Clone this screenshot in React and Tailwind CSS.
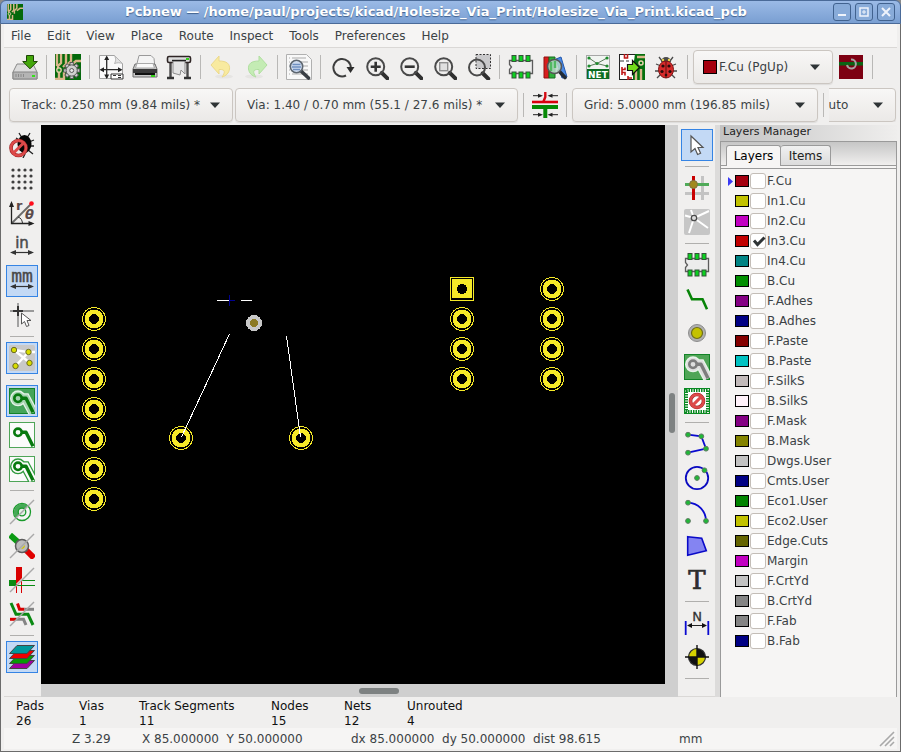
import React from 'react';

function Svg({ children, spill }) {
  return (
    <svg width="26" height="26" viewBox="0 0 26 26" fill="none" className={spill ? 'shrink-0 overflow-visible' : 'shrink-0'} aria-hidden="true">
      {children}
    </svg>
  );
}

const BoardArt = () => (
  <>
    <rect width="26" height="26" fill="#04690b" />
    <path d="M2 0v12M6 0v9l-3 3v4M11 0v10l-3 3M16 0v7l-4 4v5M26 7h-5l-5 4M4 18v8M9 18v8M0 25h8" stroke="#d9b68a" strokeWidth="2.4" />
    <circle cx="4" cy="16" r="2.2" fill="#1f8a24" stroke="#e8d2ac" strokeWidth="1.3" />
  </>
);

const Lens = ({ cx, cy, r = 8 }) => (
  <>
    <path d={`M${cx + r * 0.72} ${cy + r * 0.72}L${cx + r + 3.2} ${cy + r + 3.2}`} stroke="#303030" strokeWidth="4" strokeLinecap="round" />
    <circle cx={cx} cy={cy} r={r} stroke="#4a4a4a" strokeWidth="2" />
  </>
);

const MiniPad = ({ track, halo, bg }) => (
  <>
    {halo && (
      <>
        <path d="M9 10.3h7.5l7.5 14" stroke={halo} strokeWidth="10" />
        <circle cx="9" cy="10.3" r="8" fill={halo} />
        <path d="M9 10.3h7.5l7.5 14" stroke={bg} strokeWidth="7.6" />
        <circle cx="9" cy="10.3" r="6.6" fill={bg} />
      </>
    )}
    <path d="M9 10.3h8l7 14" stroke={track} strokeWidth="3.4" strokeLinejoin="round" />
    <circle cx="9" cy="10.3" r="3.7" fill={bg} stroke={track} strokeWidth="2.6" />
  </>
);

const Slash = () => <path d="M1 25L25 1" stroke="#a9a9a9" strokeWidth="1.4" />;

const Chip = () => (
  <>
    <path d="M1.5 6.5h23v13h-23v-4l2-2.500-2-2.500z" fill="#ececec" stroke="#5c5c5c" strokeWidth="1.3" />
    {[4, 11, 18].map((x) => (
      <g key={x} fill="#0bd11f" stroke="#35523a" strokeWidth="1">
        <rect x={x} y="1.5" width="4" height="6" />
        <rect x={x} y="18" width="4" height="6" />
      </g>
    ))}
  </>
);

const Arrows = ({ y }) => (
  <>
    <path d={`M3 ${y}H23`} stroke="#333" strokeWidth="1.2" />
    <path d={`M1 ${y}l6-2.600v5.200zM25 ${y}l-6-2.600v5.200z`} fill="#333" />
  </>
);

const NoSign = ({ cx, cy, r }) => (
  <>
    <circle cx={cx} cy={cy} r={r} stroke="#9e2626" strokeWidth="3.6" />
    <circle cx={cx} cy={cy} r={r} stroke="#de4a4a" strokeWidth="2.4" />
    <path d={`M${cx - r * 0.68} ${cy - r * 0.68}L${cx + r * 0.68} ${cy + r * 0.68}`} stroke="#de4a4a" strokeWidth="3" transform={`rotate(90 ${cx} ${cy})`} />
  </>
);

const Node = ({ x, y }) => <circle cx={x} cy={y} r="2.4" fill="#1fb836" stroke="#5f7a63" strokeWidth="1" />;

const icons = {
  save: (
    <Svg>
      <path d="M5 10h16l4 8v7H1v-7z" fill="#dcdcdc" stroke="#8a8a8a" />
      <path d="M1 18h24v7H1z" fill="#b4b4b4" stroke="#858585" />
      <path d="M4 20v3M6.500 20v3M9 20v3M11.500 20v3" stroke="#8a8a8a" />
      <rect x="20" y="21" width="3" height="2" fill="#35e01b" />
      <path d="M14.500 1.500h7v6h3.800L18 14.800 10.700 7.500h3.800z" fill="#43a60a" stroke="#1d4506" />
    </Svg>
  ),
  board: (
    <Svg>
      <BoardArt />
      {[0, 45, 90, 135].map((a) => (
        <path key={a} d="M16.700 8v17" stroke="#5a5a5a" strokeWidth="4.200" transform={`rotate(${a} 16.700 16.500)`} />
      ))}
      {[0, 45, 90, 135].map((a) => (
        <path key={a} d="M16.700 9v15" stroke="#d0d0d0" strokeWidth="2.400" transform={`rotate(${a} 16.700 16.500)`} />
      ))}
      <circle cx="16.700" cy="16.500" r="5.600" fill="#d0d0d0" stroke="#5a5a5a" />
      <circle cx="16.700" cy="16.500" r="2" fill="#e9e9e9" stroke="#5a5a5a" />
    </Svg>
  ),
  page: (
    <Svg>
      <path d="M1.500 1.500h15l8 8v15h-23z" fill="#fafafa" stroke="#a2a2a2" />
      <path d="M16.500 1.500c2 4 1 6 0 8 3-1 5-1 8 0z" fill="#e3e3e3" stroke="#b5b5b5" />
      <path d="M8.700 3v21M3 15.700h20" stroke="#2c2c2c" strokeWidth="1.300" />
      <path d="M8.700 1.500l2.500 4.500h-5zM8.700 25l2.500-4.500h-5zM1.500 15.700L6 13.200v5zM24.500 15.700L20 13.200v5z" fill="#222" />
      <path d="M13 20h12v5H13z" fill="#fff" stroke="#333" />
      <path d="M15 21.500h3M20 21.500h3M20 23.500h3" stroke="#333" />
    </Svg>
  ),
  print: (
    <Svg>
      <path d="M7 1.500h12l3 3 1 9H4z" fill="#f4f4f4" stroke="#9a9a9a" />
      <path d="M3 10h20l2 5v8H1v-8z" fill="#c9c9c9" stroke="#6f6f6f" />
      <path d="M5 9.500h16l1.500 4.500h-19z" fill="#fafafa" stroke="#aaa" />
      <rect x="1" y="15" width="24" height="4" fill="#3a3a3a" />
      <rect x="3" y="19" width="20" height="2" fill="#111" />
      <rect x="19" y="21" width="4" height="2" fill="#35d01b" />
    </Svg>
  ),
  plot: (
    <Svg>
      <path d="M4.500 6v18M21.500 6v18" stroke="#4a4a4a" strokeWidth="2.400" />
      <path d="M1 24h7M18 24h7" stroke="#333" strokeWidth="2.400" />
      <rect x="1.500" y="2.500" width="23" height="6" rx="1.500" fill="#ddd" stroke="#2f2525" strokeWidth="1.600" />
      <path d="M7 7h12v13l-4-4-1 5-7-2z" fill="#e4e4e4" stroke="#8d8d8d" />
      <path d="M6 6.500h14" stroke="#222" strokeWidth="1.400" />
      <rect x="20" y="4" width="3" height="2" fill="#35d01b" />
    </Svg>
  ),
  undo: (
    <Svg>
      <ellipse cx="15" cy="22.500" rx="9" ry="2" fill="#e6e5e3" />
      <path d="M2 11l8-9v5c8 0 11 3 10.500 8-.500 4-3.500 7-7.500 8 3-4 4-8-3-7.500V20z" fill="#f8ea9f" stroke="#ecd98a" />
    </Svg>
  ),
  redo: (
    <Svg>
      <ellipse cx="11" cy="22.500" rx="9" ry="2" fill="#e6e5e3" />
      <path d="M24 11l-8-9v5c-8 0-11 3-10.500 8 .500 4 3.500 7 7.500 8-3-4-4-8 3-7.500V20z" fill="#c4ecb4" stroke="#b0dfa0" />
    </Svg>
  ),
  find: (
    <Svg>
      <path d="M.500.500h20l5 5v20H.500z" fill="#f8f8f8" stroke="#b0b0b0" />
      <path d="M3 4h1M3 8h1M3 12h1M3 16h1M3 20h1M6 4h14M6 8h16M6 12h16M6 16h16M6 20h16" stroke="#aaa" />
      <path d="M15 17l7.500 7" stroke="#3a3f45" strokeWidth="3.600" strokeLinecap="round" />
      <circle cx="10.500" cy="12.500" r="6.200" fill="#cfdcf0" stroke="#5d6670" strokeWidth="1.600" />
      <path d="M6.500 10.500h8M6 13h9M7 15.500h7" stroke="#6f8fc0" strokeWidth="1.400" />
    </Svg>
  ),
  refresh: (
    <Svg>
      <path d="M17 21.500A8.700 8.700 0 1 1 21.800 14" stroke="#3d3d3d" strokeWidth="2" />
      <path d="M17.500 13h8l-4 6z" fill="#2c2c2c" />
    </Svg>
  ),
  zoomIn: (
    <Svg>
      <Lens cx={12.7} cy={12.7} r={8.5} />
      <path d="M7.700 12.700h10M12.700 7.700v10" stroke="#333" strokeWidth="2.600" />
    </Svg>
  ),
  zoomOut: (
    <Svg>
      <Lens cx={12.7} cy={12.7} r={8.5} />
      <path d="M7.700 12.700h10" stroke="#333" strokeWidth="2.600" />
    </Svg>
  ),
  zoomFit: (
    <Svg>
      <Lens cx={12.7} cy={12.7} r={8.5} />
      <rect x="8.700" y="8.700" width="8" height="8" fill="#e0e0e0" stroke="#8f8f8f" strokeWidth="1.400" />
    </Svg>
  ),
  zoomArea: (
    <Svg>
      <rect x="11" y=".500" width="14.500" height="14" fill="#c9c9cb" stroke="#333" strokeDasharray="2 1.500" />
      <Lens cx={12} cy={13.5} r={8} />
    </Svg>
  ),
  chip: <Svg><Chip /></Svg>,
  library: (
    <Svg>
      <path d="M2 3h5v21H2z" fill="#d81e1e" stroke="#8f1010" />
      <path d="M7 3h6v21H7z" fill="#2fae3a" stroke="#176b1f" />
      <path d="M14 5l5-2 6 20-5 1z" fill="#4a8ae6" stroke="#2358ad" />
      <path d="M17 17l6 6.500" stroke="#222b36" strokeWidth="3.600" strokeLinecap="round" />
      <circle cx="12.500" cy="12.500" r="7" fill="#b9d8c9" fillOpacity=".85" stroke="#555" strokeWidth="1.600" />
      <path d="M9 8v9M13 7v7" stroke="#52b862" strokeWidth="2.400" />
    </Svg>
  ),
  net: (
    <Svg>
      <rect x="1.500" y="1.500" width="23" height="23" fill="#f1f4f1" stroke="#a6a6a6" />
      <path d="M4 4l8 5.500L22 4M4 12l8-2.500L22 12" stroke="#5a7a5a" />
      <g fill="#1c8a2b"><circle cx="4" cy="4" r="1.600" /><circle cx="22" cy="4" r="1.600" /><circle cx="12" cy="9.500" r="1.600" /><circle cx="4" cy="12" r="1.600" /><circle cx="22" cy="12" r="1.600" /></g>
      <rect x="2" y="15" width="22" height="10" fill="#0c6d22" />
      <text x="13" y="23.500" textAnchor="middle" fontSize="9" fontWeight="bold" fontFamily="DejaVu Sans, sans-serif" fill="#fff">NET</text>
    </Svg>
  ),
  netlist: (
    <Svg>
      <rect x=".500" y=".500" width="25" height="25" fill="#fff" stroke="#222" />
      <path d="M16 0h10v26H14V14z" fill="#05700d" />
      <path d="M18 3h8M17 17v9M22 15v11" stroke="#d9b68a" strokeWidth="2.400" />
      <circle cx="22" cy="9" r="2" fill="#05700d" stroke="#e8d2ac" strokeWidth="1.500" />
      <path d="M5.500 0v4h3V0M3 13v8M3 15.500h3v-2M3 18.500h3v3M9 22v4M9 24h4" stroke="#c01818" strokeWidth="1.600" />
      <path d="M0 7h5M7 7h3" stroke="#333" />
      <path d="M8.500 10.500h5v-4l7 7-7 7v-4h-5z" fill="#73dd1b" stroke="#111" strokeWidth="1.200" />
    </Svg>
  ),
  bug: (
    <Svg>
      <path d="M6 3l3 4M20 3l-3 4M3 10l5 2M23 10l-5 2M2 17h6M24 17h-6M4 24l4-4M22 24l-4-4" stroke="#4a4a4a" strokeWidth="1.300" />
      <path d="M8 8a5 5 0 0 1 10 0z" fill="#4a4a4a" />
      <circle cx="10" cy="6" r="1.200" fill="#e9d24b" /><circle cx="16" cy="6" r="1.200" fill="#e9d24b" />
      <ellipse cx="13" cy="15.500" rx="7.500" ry="8.500" fill="#d62a2a" stroke="#7d1414" />
      <path d="M13 7.500V24" stroke="#5a0f0f" />
      <g fill="#2a0c0c"><circle cx="10" cy="12" r="1.600" /><circle cx="16" cy="12" r="1.600" /><circle cx="9" cy="17.500" r="1.600" /><circle cx="17" cy="17.500" r="1.600" /><circle cx="13" cy="21" r="1.300" /></g>
    </Svg>
  ),
  layerPair: (
    <Svg>
      <rect x="1" y="1" width="24" height="24" fill="#7d0012" />
      <rect x="1" y="8" width="24" height="3.500" fill="#0b6414" />
      <path d="M13 5.500a4.500 4.500 0 1 1-4 5.500" stroke="#a9a2a2" strokeWidth="2" />
    </Svg>
  ),
  clearance: (
    <Svg>
      <path d="M13.300 0v5l-2 5" stroke="#d40b12" strokeWidth="2.400" />
      <path d="M0 10h26" stroke="#d8000c" strokeWidth="2.600" />
      <path d="M0 15h26" stroke="#068a06" strokeWidth="4" />
      <path d="M13.300 16v10" stroke="#068a06" strokeWidth="4" />
      <path d="M1 3.700h8M26 3.700h-8M1 22.700h8M26 22.700h-8" stroke="#222" />
      <path d="M11 3.700L6 1.700v4zM15.500 3.700l5-2v4zM11 22.700l-5-2v4zM15.500 22.700l5-2v4z" fill="#222" />
    </Svg>
  ),
  drcOff: (
    <Svg>
      <path d="M10 1l3 5M21 1l-3 5M25 8l-5 2M25 14h-5M24 22l-5-4M7 6l5 3M16 22l-2 4" stroke="#222" strokeWidth="1.300" />
      <ellipse cx="15.500" cy="12" rx="7" ry="9" fill="#050505" />
      <circle cx="9.500" cy="16" r="7.500" stroke="#9e2626" strokeWidth="3.600" />
      <circle cx="9.500" cy="16" r="7.500" stroke="#de4a4a" strokeWidth="2.400" />
      <path d="M4.500 21l10-10" stroke="#de4a4a" strokeWidth="3" />
    </Svg>
  ),
  grid: (
    <Svg>
      {[4, 10, 16, 22].map((y) => [4, 10, 16, 22].map((x) => <circle key={`${x}-${y}`} cx={x} cy={y} r="1.600" fill="#3f3f3f" />))}
    </Svg>
  ),
  polar: (
    <Svg spill>
      <path d="M2.500 23.500L22 4" stroke="#6a6a6a" strokeWidth="1.800" />
      <path d="M2.500 3v20.500H23" stroke="#222" strokeWidth="1.300" />
      <path d="M2.500 1L5 7H0zM25.500 23.500l-6-2.500v5z" fill="#222" />
      <path d="M9 17c3 1 4 3 4.500 6" stroke="#333" />
      <circle cx="22.500" cy="3.500" r="2.300" fill="#ff0d1b" />
      <text x="7" y="10" fontSize="13" fontWeight="bold" fontFamily="DejaVu Sans, sans-serif" fill="#5a4a4a">r</text>
      <text x="16" y="19" fontSize="13" fontWeight="bold" fontStyle="italic" fontFamily="DejaVu Sans, sans-serif" fill="#5a4a4a">θ</text>
    </Svg>
  ),
  inch: (
    <Svg spill>
      <text x="13" y="14" textAnchor="middle" fontSize="15" fontFamily="DejaVu Sans, sans-serif" fill="#4a4a4a" stroke="#4a4a4a" strokeWidth=".500">in</text>
      <Arrows y={18.5} />
    </Svg>
  ),
  mm: (
    <Svg spill>
      <text x="13" y="14" textAnchor="middle" fontSize="18" fontFamily="DejaVu Sans Mono, monospace" fill="#4a4a4a" stroke="#4a4a4a" strokeWidth=".400">mm</text>
      <Arrows y={18.5} />
    </Svg>
  ),
  cursorShape: (
    <Svg>
      <path d="M1 9h24M9 1v24" stroke="#9a9a9a" strokeWidth="1.800" />
      <path d="M4 9h10M9 4v10" stroke="#333" strokeWidth="2" />
      <path d="M12.500 11v11l3-2.500 2 5 2.500-1-2-5h4z" fill="#fff" stroke="#555" />
    </Svg>
  ),
  ratsnest: (
    <Svg>
      <rect width="26" height="26" rx="2" fill="#c9c9c9" />
      <path d="M5 5l14.500 2L6.500 21M5 5l16 13M20 7h6" stroke="#fff" strokeWidth="2.400" />
      {[[5, 5], [19.5, 7], [6.5, 21], [20.5, 18]].map(([x, y]) => <circle key={x} cx={x} cy={y} r="2.700" fill="#d9de00" stroke="#6b6b25" />)}
    </Svg>
  ),
  zoneFill: <Svg><rect width="26" height="26" fill="#45a45a" /><rect x=".500" y=".500" width="25" height="25" stroke="#138327" /><MiniPad track="#08790f" halo="#e6f3e9" bg="#a5d3b0" /></Svg>,
  zoneNone: <Svg><rect x=".500" y=".500" width="25" height="25" fill="#fbfbfb" stroke="#4fa558" /><MiniPad track="#08790f" bg="#fbfbfb" /></Svg>,
  zoneOutline: <Svg><rect x=".500" y=".500" width="25" height="25" fill="#fbfbfb" stroke="#4fa558" /><MiniPad track="#08790f" halo="#2f9a3d" bg="#fbfbfb" /></Svg>,
  padSketch: (
    <Svg>
      <circle cx="13" cy="13" r="8.500" fill="#f6f6f6" stroke="#199a2b" strokeWidth="1.300" />
      <path d="M7 19A8.500 8.500 0 0 1 19 7z" fill="#46a956" />
      <circle cx="13" cy="13" r="3.800" fill="#e3f1e5" stroke="#199a2b" strokeWidth="1.300" />
      <Slash />
    </Svg>
  ),
  viaSketch: (
    <Svg>
      <path d="M1 2l9 8" stroke="#0a9a12" strokeWidth="6" />
      <path d="M15 15l10 10" stroke="#e00000" strokeWidth="6" />
      <circle cx="13" cy="13" r="6.500" fill="#bdbdbd" stroke="#5d5d5d" strokeWidth="1.500" />
      <path d="M12 16a4 4 0 0 0 4-4z" fill="#d2c400" />
      <Slash />
    </Svg>
  ),
  trackSketch: (
    <Svg>
      <path d="M0 13h7v6H0z" fill="#0a8a12" />
      <path d="M7 0h6v11l-6 6z" fill="#d90000" />
      <path d="M7.500 17v9M12.500 13v13" stroke="#d90000" />
      <path d="M7 18.500h19M13 13.500h13" stroke="#0a8a12" />
      <Slash />
    </Svg>
  ),
  contrast: (
    <Svg>
      <path d="M8.500 2.500l2 5.800h5" stroke="#d90000" strokeWidth="3" />
      <path d="M15.500 8.300H25" stroke="#858585" strokeWidth="3" />
      <path d="M1 18.300h6" stroke="#d90000" strokeWidth="3" />
      <path d="M7 18.300h7.500L17 24" stroke="#858585" strokeWidth="3" />
      <path d="M2 2l5 11.300h12L24 24" stroke="#0a8a12" strokeWidth="3" />
      <Slash />
    </Svg>
  ),
  layers: (
    <Svg>
      {[['#a000a0', 16.5], ['#089a08', 11.5], ['#ee0000', 6.5], ['#00979b', 1.5]].map(([c, y]) => (
        <path key={c} d={`M8 ${y}h17.500l-7.500 8H.5z`} fill={c} stroke="#444" />
      ))}
    </Svg>
  ),
  pointer: (
    <Svg>
      <path d="M7 4v16l4-3.500 2.600 6 3-1.300-2.600-5.700h5z" fill="#fff" stroke="#555" strokeWidth="1.200" />
    </Svg>
  ),
  highlight: (
    <Svg>
      <path d="M18.500 1v24M1 18.500h24" stroke="#c3c3c3" strokeWidth="3" />
      <path d="M9.500 1v24" stroke="#c80000" strokeWidth="3" />
      <path d="M1 9.500h24" stroke="#4faa58" strokeWidth="3" />
      <circle cx="9.500" cy="9.500" r="4" fill="#a08a1e" stroke="#7c7445" />
    </Svg>
  ),
  localRats: (
    <Svg>
      <rect width="26" height="26" rx="2" fill="#c6c6c6" />
      <path d="M10 9L1 6.500M10 9l-3-8M10 9L25 2M10 9l14 10M10 9L5 24" stroke="#fff" strokeWidth="2" />
      <circle cx="10" cy="9" r="2.700" fill="#ddd" stroke="#4a4a4a" strokeWidth="1.300" />
    </Svg>
  ),
  route: <Svg><path d="M3.500 3.500L8 13.300h10.500l4.500 10" stroke="#088408" strokeWidth="2.600" /></Svg>,
  via: (
    <Svg>
      <circle cx="13" cy="13" r="8.500" fill="#b0b0b0" stroke="#8c8c8c" />
      <circle cx="13" cy="13" r="5.500" fill="#c4c200" stroke="#6e6d1a" strokeWidth="1.200" />
    </Svg>
  ),
  zone: <Svg><rect width="26" height="26" fill="#4fa556" /><rect x=".500" y=".500" width="25" height="25" stroke="#138327" /><MiniPad track="#7d7d7d" halo="#e9f3ea" bg="#dedede" /></Svg>,
  keepout: (
    <Svg>
      <rect x="2" y="2" width="22" height="22" fill="#fff" stroke="#0a8a22" strokeWidth="4" strokeDasharray="1.500 1" />
      <rect x=".500" y=".500" width="25" height="25" stroke="#0a8a22" />
      <circle cx="13" cy="13" r="9" fill="#fff" />
      <NoSign cx={13} cy={13} r={6.5} />
    </Svg>
  ),
  polyline: <Svg><path d="M4 3.700l13.300 1.600L22 17.700 4 21.700" stroke="#0a0ad0" strokeWidth="1.800" /><Node x={4} y={3.7} /><Node x={17.3} y={5.3} /><Node x={22} y={17.7} /><Node x={4} y={21.7} /></Svg>,
  circle: <Svg><circle cx="13" cy="13" r="11.200" stroke="#0a0ac0" strokeWidth="1.800" /><Node x={13} y={13} /><Node x={20.5} y={5.3} /></Svg>,
  arc: <Svg><path d="M4 3.700C14 4 22 12 22 22" stroke="#0a0ad0" strokeWidth="1.800" /><Node x={4} y={3.7} /><Node x={4} y={22} /><Node x={22} y={22} /></Svg>,
  polygon: <Svg><path d="M3.700 3.700l14 1.600 4.600 12.400-18.600 4.600z" fill="#8484f2" stroke="#0a0ac8" strokeWidth="1.600" /></Svg>,
  text: <Svg spill><text x="13" y="22" textAnchor="middle" fontSize="26" fontFamily="DejaVu Serif, serif" fill="#2d2d2d" stroke="#2d2d2d" strokeWidth=".700">T</text></Svg>,
  dimension: (
    <Svg spill>
      <text x="13" y="11" textAnchor="middle" fontSize="13" fontFamily="DejaVu Sans, sans-serif" fill="#333" stroke="#333" strokeWidth=".300">N</text>
      <path d="M1.700 11v14M24.300 11v14" stroke="#0a0ad0" strokeWidth="1.800" />
      <path d="M4 15.500h18" stroke="#222" />
      <path d="M3 15.500l5-2.500v5zM23 15.500L18 13v5z" fill="#111" />
    </Svg>
  ),
  target: (
    <Svg>
      <circle cx="13" cy="13" r="8.500" fill="#111" />
      <path d="M13 13V4.500A8.500 8.500 0 0 0 4.500 13zM13 13v8.500a8.500 8.500 0 0 0 8.500-8.500z" fill="#d6d200" />
      <circle cx="13" cy="13" r="8.500" stroke="#333" strokeWidth="1.200" />
      <path d="M13 1v24M1 13h24" stroke="#111" strokeWidth="1.400" />
    </Svg>
  ),
};

function Tool({ name, label, active, disabled }) {
  return (
    <button
      type="button"
      aria-label={label}
      disabled={disabled}
      className={`flex h-8 w-8 shrink-0 items-center justify-center ${active ? 'border border-[#3584e4] bg-[#c3d9f5]' : ''}`}
    >
      {icons[name]}
    </button>
  );
}

const VSep = () => <div className="mx-[3px] h-6 w-px shrink-0 bg-[#b9b8b6]" />;
const HSep = () => <div className="my-[3px] h-px w-6 shrink-0 bg-[#b0afad]" />;

function Combo({ label, value, className, swatch }) {
  return (
    <div className={`flex h-[34px] shrink-0 items-center rounded-[4px] border border-[#cbc6c1] bg-linear-to-b from-[#f8f7f6] to-[#ebe9e7] pr-3 shadow-[0_1px_1px_rgba(0,0,0,0.08)] ${className}`}>
      {swatch && <span className="mr-0.5 h-3.5 w-3.5 shrink-0 border border-black bg-[#a5000f]" />}
      <select aria-label={label} className="min-w-0 flex-1 appearance-none bg-transparent text-xs text-[#3b4245] outline-none">
        <option>{value}</option>
      </select>
      <svg width="10" height="6" viewBox="0 0 10 6" className="pointer-events-none shrink-0" aria-hidden="true"><path d="M0 .5h10L5 6z" fill="#2f3436" /></svg>
    </div>
  );
}

const Bar = ({ items, vertical }) =>
  items.map((it, i) =>
    it === '|' ? (vertical ? <HSep key={i} /> : <VSep key={i} />) : <Tool key={i} name={it[0]} label={it[1]} active={it[2] === 'on'} disabled={it[2] === 'off'} />
  );

const topTools = [
  ['save', 'Save board'], '|', ['board', 'Board setup'], '|', ['page', 'Page settings'], ['print', 'Print'], ['plot', 'Plot'], '|',
  ['undo', 'Undo', 'off'], ['redo', 'Redo', 'off'], '|', ['find', 'Find'], '|', ['refresh', 'Redraw view'], ['zoomIn', 'Zoom in'],
  ['zoomOut', 'Zoom out'], ['zoomFit', 'Zoom to fit'], ['zoomArea', 'Zoom to selection'], '|', ['chip', 'Footprint editor'],
  ['library', 'Footprint viewer'], '|', ['net', 'Load netlist'], ['netlist', 'Update board from schematic'], ['bug', 'Design rules check'], '|',
];

const leftTools = [
  ['drcOff', 'Disable rule checking'], ['grid', 'Show grid'], ['polar', 'Polar coordinates'], ['inch', 'Inches'], ['mm', 'Millimetres', 'on'],
  ['cursorShape', 'Cursor shape'], '|', ['ratsnest', 'Show ratsnest', 'on'], '|', ['zoneFill', 'Show filled zones', 'on'],
  ['zoneNone', 'Hide zone fills'], ['zoneOutline', 'Show zone outlines'], '|', ['padSketch', 'Sketch pads'], ['viaSketch', 'Sketch vias'],
  ['trackSketch', 'Sketch tracks'], ['contrast', 'High contrast'], '|', ['layers', 'Show layers manager', 'on'],
];

const rightTools = [
  ['pointer', 'Select', 'on'], '|', ['highlight', 'Highlight net'], ['localRats', 'Local ratsnest'], '|', ['chip', 'Add footprint'],
  ['route', 'Route tracks'], ['via', 'Add via'], ['zone', 'Add filled zone'], ['keepout', 'Add keepout area'], '|', ['polyline', 'Draw line'],
  ['circle', 'Draw circle'], ['arc', 'Draw arc'], ['polygon', 'Draw polygon'], ['text', 'Add text'], '|', ['dimension', 'Add dimension'],
  ['target', 'Add target'], '|',
];

const layers = [
  ['F.Cu', '#a5000f'], ['In1.Cu', '#c2c200'], ['In2.Cu', '#c200c2'], ['In3.Cu', '#c20000'], ['In4.Cu', '#008484'], ['B.Cu', '#008f00'],
  ['F.Adhes', '#840084'], ['B.Adhes', '#000084'], ['F.Paste', '#840000'], ['B.Paste', '#00c2c2'], ['F.SilkS', '#c2baba'],
  ['B.SilkS', '#fff2fa'], ['F.Mask', '#840084'], ['B.Mask', '#848400'], ['Dwgs.User', '#c2c2c2'], ['Cmts.User', '#000084'],
  ['Eco1.User', '#008400'], ['Eco2.User', '#c2c200'], ['Edge.Cuts', '#646400'], ['Margin', '#c200c2'], ['F.CrtYd', '#c2c2c2'],
  ['B.CrtYd', '#848484'], ['F.Fab', '#848484'], ['B.Fab', '#000084'],
];

function LayerRow({ name, color, current, checked }) {
  return (
    <li className="flex h-5 items-center">
      <span className="flex w-[7px] justify-start">
        {current && <svg width="5" height="9" viewBox="0 0 5 9" aria-hidden="true"><path d="M0 0l5 4.500L0 9z" fill="#3a3af5" /></svg>}
      </span>
      <span className="h-3 w-3.5 border border-black" style={{ backgroundColor: color }} />
      <label className="flex items-center">
        <span className="relative ml-px h-4 w-4">
          <input type="checkbox" defaultChecked={checked} className="peer block h-4 w-4 appearance-none rounded-[3px] border border-[#c3bdb7] bg-white" />
          <svg viewBox="0 0 16 16" className="pointer-events-none absolute inset-0 hidden peer-checked:block" aria-hidden="true">
            <path d="M4 7.500l3.500 4L14.500 4.500" fill="none" stroke="#2f3436" strokeWidth="3" />
          </svg>
        </span>
        <span className="ml-px text-xs leading-5 text-[#3b4245]">{name}</span>
      </label>
    </li>
  );
}

const pads = [
  ...[194, 224, 254, 284, 314, 344, 374].map((y) => [53, y]),
  [421, 194], [421, 224], [421, 254],
  [511, 164], [511, 194], [511, 224], [511, 254],
  [140, 313], [260, 313],
];

function Canvas() {
  return (
    <svg className="block min-h-0 min-w-0 flex-1 bg-black" shapeRendering="crispEdges" role="img" aria-label="Board view">
      {pads.map(([x, y]) => (
        <g key={`${x}-${y}`}>
          <circle cx={x} cy={y} r="11.500" fill="none" stroke="#f5e928" />
          <circle cx={x} cy={y} r="7.200" fill="none" stroke="#f5e928" strokeWidth="4.600" />
        </g>
      ))}
      <rect x="409.500" y="152.500" width="23" height="23" fill="none" stroke="#f5e928" />
      <rect x="411" y="154" width="20" height="19" fill="#f5e928" />
      <circle cx="421" cy="164" r="5" fill="#000" />
      <circle cx="213" cy="198" r="8" fill="#c8c8c8" />
      <circle cx="213" cy="198" r="4" fill="#8c7a24" />
      <path d="M188.500 209L140.500 312M245.500 211l14 101" stroke="#fff" />
      <path d="M176 175.500h12M200 175.500h11" stroke="#fff" />
      <path d="M188 175.500h6M188.500 170v11" stroke="#000090" />
    </svg>
  );
}

const stats = [
  ['Pads', '26', 'w-[63px]'], ['Vias', '1', 'w-[60px]'], ['Track Segments', '11', 'w-[132px]'],
  ['Nodes', '15', 'w-[73px]'], ['Nets', '12', 'w-[63px]'], ['Unrouted', '4', 'w-[80px]'],
];

function WinButton({ label, children }) {
  return (
    <button type="button" aria-label={label} className="flex h-[18px] w-[18px] items-center justify-center rounded-[3px] border border-[#41628f] bg-[#88abd9]">
      <svg width="12" height="12" viewBox="0 0 12 12" fill="none" stroke="#eef3fb" strokeWidth="2" aria-hidden="true">{children}</svg>
    </button>
  );
}

export default function App() {
  return (
    <div className="flex h-screen w-full flex-col overflow-hidden bg-[#8b8b8b] font-['DejaVu_Sans',sans-serif] text-xs text-[#3b4245]">
      <header className="flex h-6 shrink-0 items-center rounded-t-[6px] border border-[#4a6a98] bg-linear-to-b from-[#9bbae6] to-[#7a9fd2] pr-[5px] pl-1.5">
        <svg width="16" height="16" viewBox="0 0 26 26" fill="none" aria-hidden="true"><BoardArt /></svg>
        <h1 className="flex-1 truncate pl-4 text-center text-[13px] font-bold text-white [text-shadow:0_1px_1px_#3f5f8c]">
          Pcbnew — /home/paul/projects/kicad/Holesize_Via_Print/Holesize_Via_Print.kicad_pcb
        </h1>
        <div className="flex gap-1">
          <WinButton label="Minimize"><path d="M2 9h8" /></WinButton>
          <WinButton label="Maximize"><path d="M2 2h8v8H2z" strokeWidth="1.500" /><path d="M5 5h2v2H5z" strokeWidth="1" /></WinButton>
          <WinButton label="Close"><path d="M2 2l8 8M10 2l-8 8" /></WinButton>
        </div>
      </header>

      <div className="flex min-h-0 flex-1 flex-col border-x border-b border-[#6b6b6b] bg-[#f0efee] px-[3px] pb-0.5">
        <nav className="flex h-6 shrink-0 items-center gap-4 border-b border-[#dad8d6] bg-[#f6f5f4] pl-[7px]">
          {['File', 'Edit', 'View', 'Place', 'Route', 'Inspect', 'Tools', 'Preferences', 'Help'].map((m) => (
            <button key={m} type="button">{m}</button>
          ))}
        </nav>

        <div className="flex h-[38px] shrink-0 items-center gap-0.5 pl-[5px]">
          <Bar items={topTools} />
          <Combo label="Active layer" value="F.Cu (PgUp)" className="w-[140px] pl-[9px]" swatch />
          <Bar items={[['layerPair', 'Layer pair'], '|']} />
        </div>

        <div className="flex h-[39px] shrink-0 items-start gap-0.5 pt-0.5 pl-[5px]">
          <Combo label="Track width" value="Track: 0.250 mm (9.84 mils) *" className="w-[224px] pl-[11px]" />
          <Combo label="Via size" value="Via: 1.40 / 0.70 mm (55.1 / 27.6 mils) *" className="w-[283px] pl-[11px]" />
          <div className="flex h-[34px] items-center gap-0.5">
            <VSep />
            <Tool name="clearance" label="Auto track width" />
            <VSep />
          </div>
          <Combo label="Grid" value="Grid: 5.0000 mm (196.85 mils)" className="w-[246px] pl-[11px]" />
          <div className="flex h-[34px] min-w-0 flex-1 items-center gap-0.5">
            <VSep />
            <div className="flex min-w-0 flex-1 justify-end overflow-hidden pr-px">
              <Combo label="Zoom" value="Zoom Auto" className="w-[126px] pl-[11px]" />
            </div>
          </div>
        </div>

        <div className="flex min-h-0 flex-1">
          <aside className="flex w-[37px] shrink-0 flex-col items-center gap-0.5 overflow-hidden border-b border-[#dad8d6] pt-1 pr-0.5">
            <Bar items={leftTools} vertical />
          </aside>
          <main className="flex min-w-0 flex-1 flex-col bg-[#cfcfcf]">
            <div className="flex min-h-0 flex-1">
              <Canvas />
              <div className="flex w-[13px] shrink-0 flex-col items-center justify-center pt-4">
                <div className="h-10 w-1.5 rounded-full bg-[#7e8282]" />
              </div>
            </div>
            <div className="flex h-[13px] shrink-0 items-center justify-center pl-[38px]">
              <div className="h-1.5 w-10 rounded-full bg-[#7e8282]" />
            </div>
          </main>
          <aside className="flex w-[37px] shrink-0 flex-col items-center gap-0.5 overflow-hidden border-b border-[#dad8d6] pt-1">
            <Bar items={rightTools} vertical />
          </aside>
          <section className="flex w-[182px] shrink-0 flex-col border-l-[5px] border-[#dcdbda]">
            <h2 className="h-4 bg-linear-to-r from-[#c3c3c3] to-[#efeeed] pl-[3px] text-[11px] leading-[13px] text-[#222]">Layers Manager</h2>
            <div className="flex min-h-0 flex-1 flex-col border border-b-0 border-[#9a9a9a] bg-[#f6f5f4]">
              <div className="flex h-6 shrink-0 items-end border-b border-[#9a9a9a] bg-linear-to-b from-[#c6c6c6] to-[#f0efee] pl-[5px]" role="tablist">
                <button type="button" role="tab" aria-selected="true" className="-mb-px h-[21px] w-[55px] rounded-t-[3px] border border-b-0 border-[#9a9a9a] bg-[#f6f5f4] text-black">Layers</button>
                <button type="button" role="tab" aria-selected="false" className="h-5 w-[50px] rounded-t-[3px] border border-b-0 border-l-0 border-[#9a9a9a] bg-linear-to-b from-[#f0f0f0] to-[#dcdcdc] text-[#222]">Items</button>
              </div>
              <ul className="mt-0.5 border-t border-[#9a9a9a] pt-0.5 pl-[7px]">
                {layers.map(([name, color]) => (
                  <LayerRow key={name} name={name} color={color} current={name === 'F.Cu'} checked={name === 'In3.Cu'} />
                ))}
              </ul>
            </div>
          </section>
        </div>

        <dl className="flex h-[31px] shrink-0 pt-0.5 pl-3 leading-[15px] text-[#111]">
          {stats.map(([k, v, w]) => (
            <div key={k} className={w}>
              <dt>{k}</dt>
              <dd>{v}</dd>
            </div>
          ))}
        </dl>
        <footer className="flex h-[21px] shrink-0 items-center bg-[#f6f5f4] pl-[68px] whitespace-pre">
          <span className="w-[70px]">Z 3.29</span>
          <span className="w-[209px]">X 85.000000  Y 50.000000</span>
          <span className="w-[328px]">dx 85.000000  dy 50.000000  dist 98.615</span>
          <span className="flex-1">mm</span>
          <svg width="16" height="16" viewBox="0 0 16 16" stroke="#a9a9a9" strokeWidth="1.600" className="mr-0.5" aria-hidden="true"><path d="M1 15L15 1M6 15l9-9M11 15l4-4" /></svg>
        </footer>
      </div>
    </div>
  );
}
